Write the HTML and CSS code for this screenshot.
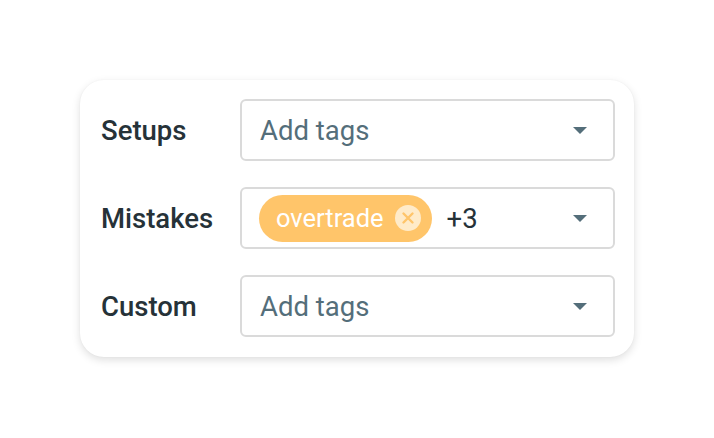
FILE: index.html
```html
<!DOCTYPE html>
<html>
<head>
<meta charset="utf-8">
<link rel="stylesheet" href="styles.css">
</head>
<body>
<div class="page">
  <div class="card">
    <div class="row">
      <div class="label">Setups</div>
      <div class="select">
        <div class="value"><span class="placeholder">Add tags</span></div>
        <svg class="caret" width="14" height="7" viewBox="0 0 14 7"><path d="M0 0h14L7 7z" fill="#546e7a"/></svg>
      </div>
    </div>
    <div class="row">
      <div class="label">Mistakes</div>
      <div class="select">
        <div class="value">
          <span class="chip">overtrade
            <span class="chip-close"><svg width="26" height="26" viewBox="0 0 26 26"><circle cx="13" cy="13" r="13" fill="#ffebc9"/><path d="M8.5 8.5l9 9M17.5 8.5l-9 9" stroke="#ffc56a" stroke-width="2.4" stroke-linecap="round"/></svg></span>
          </span>
          <span class="more">+3</span>
        </div>
        <svg class="caret" width="14" height="7" viewBox="0 0 14 7"><path d="M0 0h14L7 7z" fill="#546e7a"/></svg>
      </div>
    </div>
    <div class="row">
      <div class="label">Custom</div>
      <div class="select">
        <div class="value"><span class="placeholder">Add tags</span></div>
        <svg class="caret" width="14" height="7" viewBox="0 0 14 7"><path d="M0 0h14L7 7z" fill="#546e7a"/></svg>
      </div>
    </div>
  </div>
</div>
</body>
</html>
```
FILE: styles.css
```css
* { box-sizing: border-box; }
html, body { margin: 0; padding: 0; background: #ffffff; }
body { font-family: Roboto, "Liberation Sans", sans-serif; }
.page {
  width: 714px;
  height: 438px;
  padding: 80px 80px 0 80px;
}
.card {
  width: 554px;
  background: #fff;
  border-radius: 24px;
  padding: 19px 19px 20px 21px;
  box-shadow: 0 3px 8px rgba(0,0,0,0.13), 0 0 2px rgba(0,0,0,0.04);
  display: flex;
  flex-direction: column;
  gap: 26px;
}
.row {
  display: flex;
  align-items: center;
}
.label {
  width: 139px;
  font-size: 27.5px;
  font-weight: 500;
  color: #263238;
}
.select {
  flex: 1;
  height: 62px;
  border: 2px solid #dadada;
  border-radius: 6px;
  display: flex;
  align-items: center;
  padding: 0 26px 0 17px;
}
.value {
  flex: 1;
  display: flex;
  align-items: center;
  gap: 15px;
}
.placeholder {
  font-size: 27.5px;
  color: #546e7a;
  padding-left: 1px;
}
.chip {
  height: 47px;
  background: #ffc56a;
  border-radius: 24px;
  display: flex;
  align-items: center;
  padding: 0 11px 0 17px;
  gap: 11px;
  color: #fff;
  font-size: 25.5px;
}
.chip-close { display: flex; }
.more {
  font-size: 27.5px;
  color: #263238;
}
.caret { display: block; }
```
